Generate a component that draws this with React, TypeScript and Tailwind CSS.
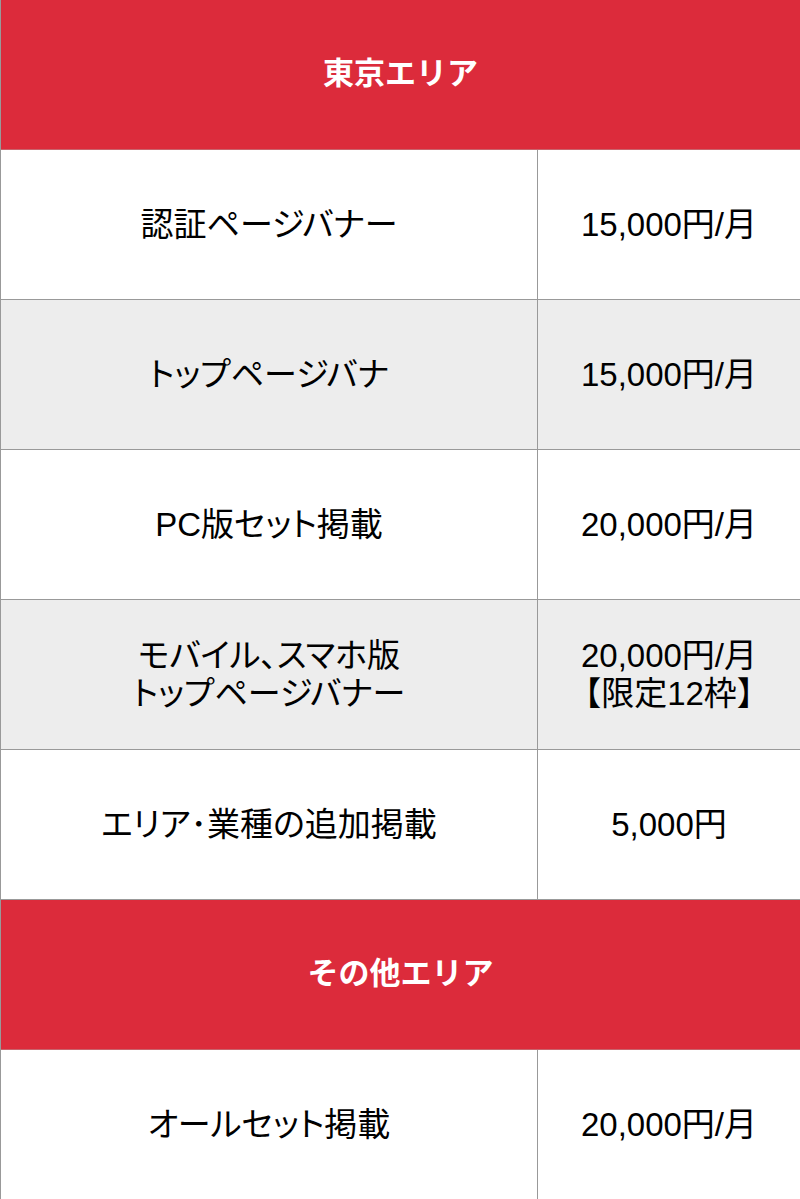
const font = {
  fontFamily: '"Liberation Sans", "Noto Sans CJK JP", sans-serif',
}

type Row = { name: string[]; price: string[] }

const tokyo: Row[] = [
  { name: ['認証ページバナー'], price: ['15,000円/月'] },
  { name: ['トップページバナ'], price: ['15,000円/月'] },
  { name: ['PC版セット掲載'], price: ['20,000円/月'] },
  { name: ['モバイル、スマホ版', 'トップページバナー'], price: ['20,000円/月', '【限定12枠】'] },
  { name: ['エリア･業種の追加掲載'], price: ['5,000円'] },
]

const others: Row[] = [{ name: ['オールセット掲載'], price: ['20,000円/月'] }]

function Header({ title }: { title: string }) {
  return (
    <div className="col-span-2 flex h-[150px] items-center justify-center border-b border-[#c9636c] bg-[#dc2b3b] text-[31px] font-bold text-white">
      {title}
    </div>
  )
}

function PriceRow({ row, shaded }: { row: Row; shaded: boolean }) {
  const bg = shaded ? 'bg-[#ededed]' : 'bg-white'
  return (
    <>
      <div
        className={`flex h-[150px] flex-col items-center justify-center border-b border-r border-[#999] text-[33px] leading-[38px] text-black [font-feature-settings:'palt'] ${bg}`}
      >
        {row.name.map((t) => (
          <span key={t}>{t}</span>
        ))}
      </div>
      <div
        className={`flex h-[150px] flex-col items-center justify-center border-b border-[#999] text-[33px] leading-[38px] text-black ${bg}`}
      >
        {row.price.map((t) => (
          <span key={t}>{t}</span>
        ))}
      </div>
    </>
  )
}

export default function App() {
  return (
    <div style={font} className="w-[800px] border-l border-[#999] bg-white">
      <div className="grid grid-cols-[537px_1fr]">
        <Header title="東京エリア" />
        {tokyo.map((row, i) => (
          <PriceRow key={row.name[0]} row={row} shaded={i % 2 === 1} />
        ))}
        <Header title="その他エリア" />
        {others.map((row, i) => (
          <PriceRow key={row.name[0]} row={row} shaded={i % 2 === 1} />
        ))}
      </div>
    </div>
  )
}
